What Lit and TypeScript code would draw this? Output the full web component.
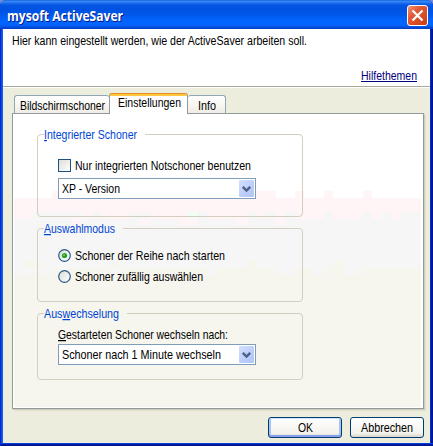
import { LitElement, html, css, svg } from "lit";
import { customElement } from "lit/decorators.js";

/** One line of text, fitted to a fixed width; "_" marks the next letter as access key. */
const line = (text: string, width: number, cls = "") => {
  const at = text.indexOf("_");
  const body =
    at < 0
      ? text
      : svg`${text.slice(0, at)}<tspan class="key">${text[at + 1]}</tspan>${text.slice(at + 2)}`;
  return html`<svg class="line ${cls}" width=${width} height="15"><text y="12" textLength=${width} lengthAdjust="spacingAndGlyphs">${body}</text></svg>`;
};

const textStyles = css`
  .line { display: block; flex: none; overflow: visible; font: 12.4px "Liberation Sans", Arial, sans-serif; fill: #000; }
  .key { text-decoration: underline; text-decoration-thickness: 1px; text-underline-offset: 1px; }
`;

@customElement("xp-combo")
class XpCombo extends LitElement {
  static properties = { text: {}, width: { type: Number } };
  declare text: string;
  declare width: number;
  static styles = [textStyles, css`
    :host { display: flex; box-sizing: border-box; width: 198px; height: 21px; border: 1px solid #7f9db9; background: #fff; padding: 1px 1px 1px 3px; justify-content: space-between; }
    .line { margin-top: 1px; }
    .drop { width: 15px; height: 17px; border-radius: 1px; background: linear-gradient(135deg, #d5e0fe, #bacdfb 60%, #b1c6f5); display: block; }
  `];
  render() {
    return html`${line(this.text, this.width)}
      <svg class="drop" viewBox="0 0 15 17"><path d="M3.8 6.8 7.5 10.5 11.2 6.8" fill="none" stroke="#4d6185" stroke-width="2.4"/></svg>`;
  }
}

@customElement("app-root")
class AppRoot extends LitElement {
  static styles = [textStyles, css`
    :host { display: block; width: 433px; height: 446px; overflow: hidden; background: #7388d8; }
    .window { box-sizing: border-box; width: 433px; height: 446px; padding: 0 3px 3px; border-radius: 6px 6px 0 0; display: flex; flex-direction: column;
      background: linear-gradient(90deg, #0019cf 0, #0831d9 1px, #166aee 2px, #0855dd 3px, #0855dd 50%, #0441d8 430px, #001da0 431px, #00138c 433px);
      position: relative; }
    .window::after { content: ""; position: absolute; left: 1px; right: 0; bottom: 0; height: 3px; background: linear-gradient(#0441d8 1px, #001da0 1px, #00138c); }
    .title { flex: none; margin: 0 -3px; height: 29px; box-sizing: border-box; padding: 5px 5px 0 7px; display: flex; justify-content: space-between; border-radius: 6px 6px 0 0;
      background: linear-gradient(#0058dc 0, #3f8cf3 1px, #2170ee 3px, #0355e4 5px, #0053e1 9px, #0056e8 14px, #0063fc 20px, #0066ff 24px, #005df0 26px, #0044cf 28px, #003dc7 29px); }
    .caption { fill: #fff; font: bold 13.5px "Open Sans", "Noto Sans", sans-serif; text-shadow: 1px 1px 0 #0a1883; margin-top: 4px; }
    .close { width: 21px; height: 21px; display: block; }
    .head { flex: none; height: 57px; background: #fff; padding: 4px 13px 4px 9px; box-sizing: border-box; display: flex; flex-direction: column; justify-content: space-between; }
    .link { fill: #000080; border-bottom: 1px solid #000080; align-self: flex-end; height: 13px; }
    .body { flex: 1; border-top: 1px solid #aca899; box-shadow: inset 0 1px #fff; background: #eceddc; padding: 6px 6px 0 9px; display: flex; flex-direction: column; }
    .tabs { display: flex; height: 21px; align-items: flex-end; padding-left: 2px; position: relative; z-index: 1; }
    .tab { box-sizing: border-box; height: 19px; border: 1px solid #91a7b4; border-bottom: 1px solid #919b9c; border-radius: 3px 3px 0 0; background: linear-gradient(#fff, #f6f5f0 60%, #efece4); padding: 2px 0 0 5px; }
    .tab.first { width: 95px; border-right: 0; }
    .tab.info { width: 38px; padding-left: 10px; border-left: 0; }
    .tab.on { width: 79px; height: 21px; padding: 2px 0 0 8px; border: 1px solid #919b9c; border-top: 0; border-bottom: 0; background: linear-gradient(#e68b2c 1px, #ffc73c 1px, #ffc73c 3px, #fff 3px); }
    .panel { width: 412px; height: 296px; box-sizing: border-box; border: 1px solid #919b9c; box-shadow: 1px 1px #d0cebf, 2px 2px #e3e0d0; position: relative; margin-top: -1px; padding: 13px 0 0 24px; display: flex; flex-direction: column; background: #fff; }
    .tint { position: absolute; left: 1px; top: 1px; }
    .group { position: relative; box-sizing: border-box; width: 266px; margin: 0; border: 1px solid #d3cebd; border-radius: 4px; padding: 0 0 0 6px; min-width: 0; }
    .g1 { height: 90px; } .g2 { height: 81px; margin-top: 4px; } .g3 { height: 74px; margin-top: 4px; }
    legend { height: 15px; padding: 0; }
    .g1 legend { width: 101px; } .g2 legend { width: 79px; } .g3 legend { width: 83px; }
    .legend { fill: #0046d5; }
    .rows { padding-left: 14px; display: flex; flex-direction: column; }
    .g1 .rows { padding-top: 16px; gap: 5px; }
    .g2 .rows { padding-top: 12px; gap: 6px; }
    .g3 .rows { padding-top: 6px; gap: 2px; }
    .choice { display: flex; height: 15px; gap: 4px; align-items: center; }
    .check { box-sizing: border-box; width: 13px; height: 13px; border: 1px solid #1c5180; background: linear-gradient(135deg, #dcdcd7, #fff); }
    .radio { width: 13px; height: 13px; display: block; }
    .foot { display: flex; justify-content: flex-end; gap: 8px; margin-top: 8px; }
    button { box-sizing: border-box; width: 74px; height: 21px; border: 1px solid #003c74; border-radius: 3px; padding: 0; display: flex; justify-content: center; background: linear-gradient(#fff, #f3f2ec 80%, #d9d3c8); }
    button .line { margin-top: 2px; }
    .ok { box-shadow: inset 0 1px #cee7ff, inset 0 -2px #8aa0ee, inset 2px 0 #a9c3f3, inset -2px 0 #a9c3f3; }
  `];

  radio(on: boolean) {
    return html`<svg class="radio" viewBox="0 0 13 13">
      <defs><linearGradient id="r" x2="1" y2="1"><stop stop-color="#dcdcd7"/><stop offset="1" stop-color="#fff"/></linearGradient></defs>
      <circle cx="6.5" cy="6.5" r="5.8" fill="url(#r)" stroke="#2a5b88" stroke-width="1.2"/>
      ${on ? svg`<circle cx="6.5" cy="6.5" r="2.6" fill="#21a121"/><circle cx="6" cy="6" r="1.1" fill="#5fd05b"/>` : ""}
    </svg>`;
  }

  tint() {
    return html`<svg class="tint" width="408" height="292" viewBox="14 115 408 292" shape-rendering="crispEdges">
      <path fill="#fff5f6" d="M14 198H53V191H64V198H250V191H276V198H295V191H304V198H324V191H333V198H363V191H372V198H421V230H14z"/>
      <path fill="#f6f6f6" d="M14 219H33V212H82V219H92V212H101V219H130V212H150V219H198V212H208V219H247V212H257V219H266V212H276V219H285V212H295V219H324V212H333V219H363V212H372V219H382V212H391V219H401V212H421V290H14z"/>
      <path fill="#fff5f6" d="M72 218H81V225H72zM140 218H150V225H140zM179 218H198V225H179zM237 218H247V225H237zM276 218H285V225H276zM343 213H363V219H343z"/>
      <path fill="#f1fff2" d="M188 212H198V218H188z"/>
      <path fill="#f6f5ee" d="M14 268H421V407H14z"/>
      <path fill="#f6f5ee" d="M24 261H43V268H24zM111 261H121V268H111zM247 261H256V268H247zM334 261H343V268H334z"/>
      <path fill="#f6f6f6" d="M14 268H53V275H14zM111 268H121V275H111zM208 268H218V275H208zM276 268H295V275H276zM314 268H324V275H314zM343 268H363V275H343z"/>
    </svg>`;
  }

  render() {
    return html`<div class="window">
      <div class="title">
        ${line("mysoft ActiveSaver", 116, "caption")}
        <svg class="close" viewBox="0 0 21 21">
          <defs><linearGradient id="c" x2="1" y2="1"><stop stop-color="#f09a80"/><stop offset=".35" stop-color="#e35a36"/><stop offset="1" stop-color="#c83b10"/></linearGradient></defs>
          <rect x=".5" y=".5" width="20" height="20" rx="2.5" fill="url(#c)" stroke="#fff"/>
          <path d="M5.5 5.5 15.5 15.5M15.5 5.5 5.5 15.5" stroke="#fff" stroke-width="2.2"/>
        </svg>
      </div>
      <div class="head">
        ${line("Hier kann eingestellt werden, wie der ActiveSaver arbeiten soll.", 295)}
        ${line("Hilfethemen", 56, "link")}
      </div>
      <div class="body">
        <div class="tabs">
          <div class="tab first">${line("Bildschirmschoner", 85)}</div>
          <div class="tab on">${line("Einstellungen", 63)}</div>
          <div class="tab info">${line("Info", 18)}</div>
        </div>
        <div class="panel">
          ${this.tint()}
          <fieldset class="group g1">
            <legend>${line("_Integrierter Schoner", 93, "legend")}</legend>
            <div class="rows">
              <div class="choice"><span class="check"></span>${line("Nur integrierten Notschoner benutzen", 176)}</div>
              <xp-combo text="XP - Version" width="58"></xp-combo>
            </div>
          </fieldset>
          <fieldset class="group g2">
            <legend>${line("_Auswahlmodus", 71, "legend")}</legend>
            <div class="rows">
              <div class="choice">${this.radio(true)}${line("Schoner der Reihe nach starten", 150)}</div>
              <div class="choice">${this.radio(false)}${line("Schoner zufällig auswählen", 128)}</div>
            </div>
          </fieldset>
          <fieldset class="group g3">
            <legend>${line("Aus_wechselung", 75, "legend")}</legend>
            <div class="rows">
              ${line("_Gestarteten Schoner wechseln nach:", 170)}
              <xp-combo text="Schoner nach 1 Minute wechseln" width="159"></xp-combo>
            </div>
          </fieldset>
        </div>
        <div class="foot">
          <button class="ok">${line("OK", 15)}</button>
          <button>${line("Abbrechen", 52)}</button>
        </div>
      </div>
    </div>`;
  }
}
